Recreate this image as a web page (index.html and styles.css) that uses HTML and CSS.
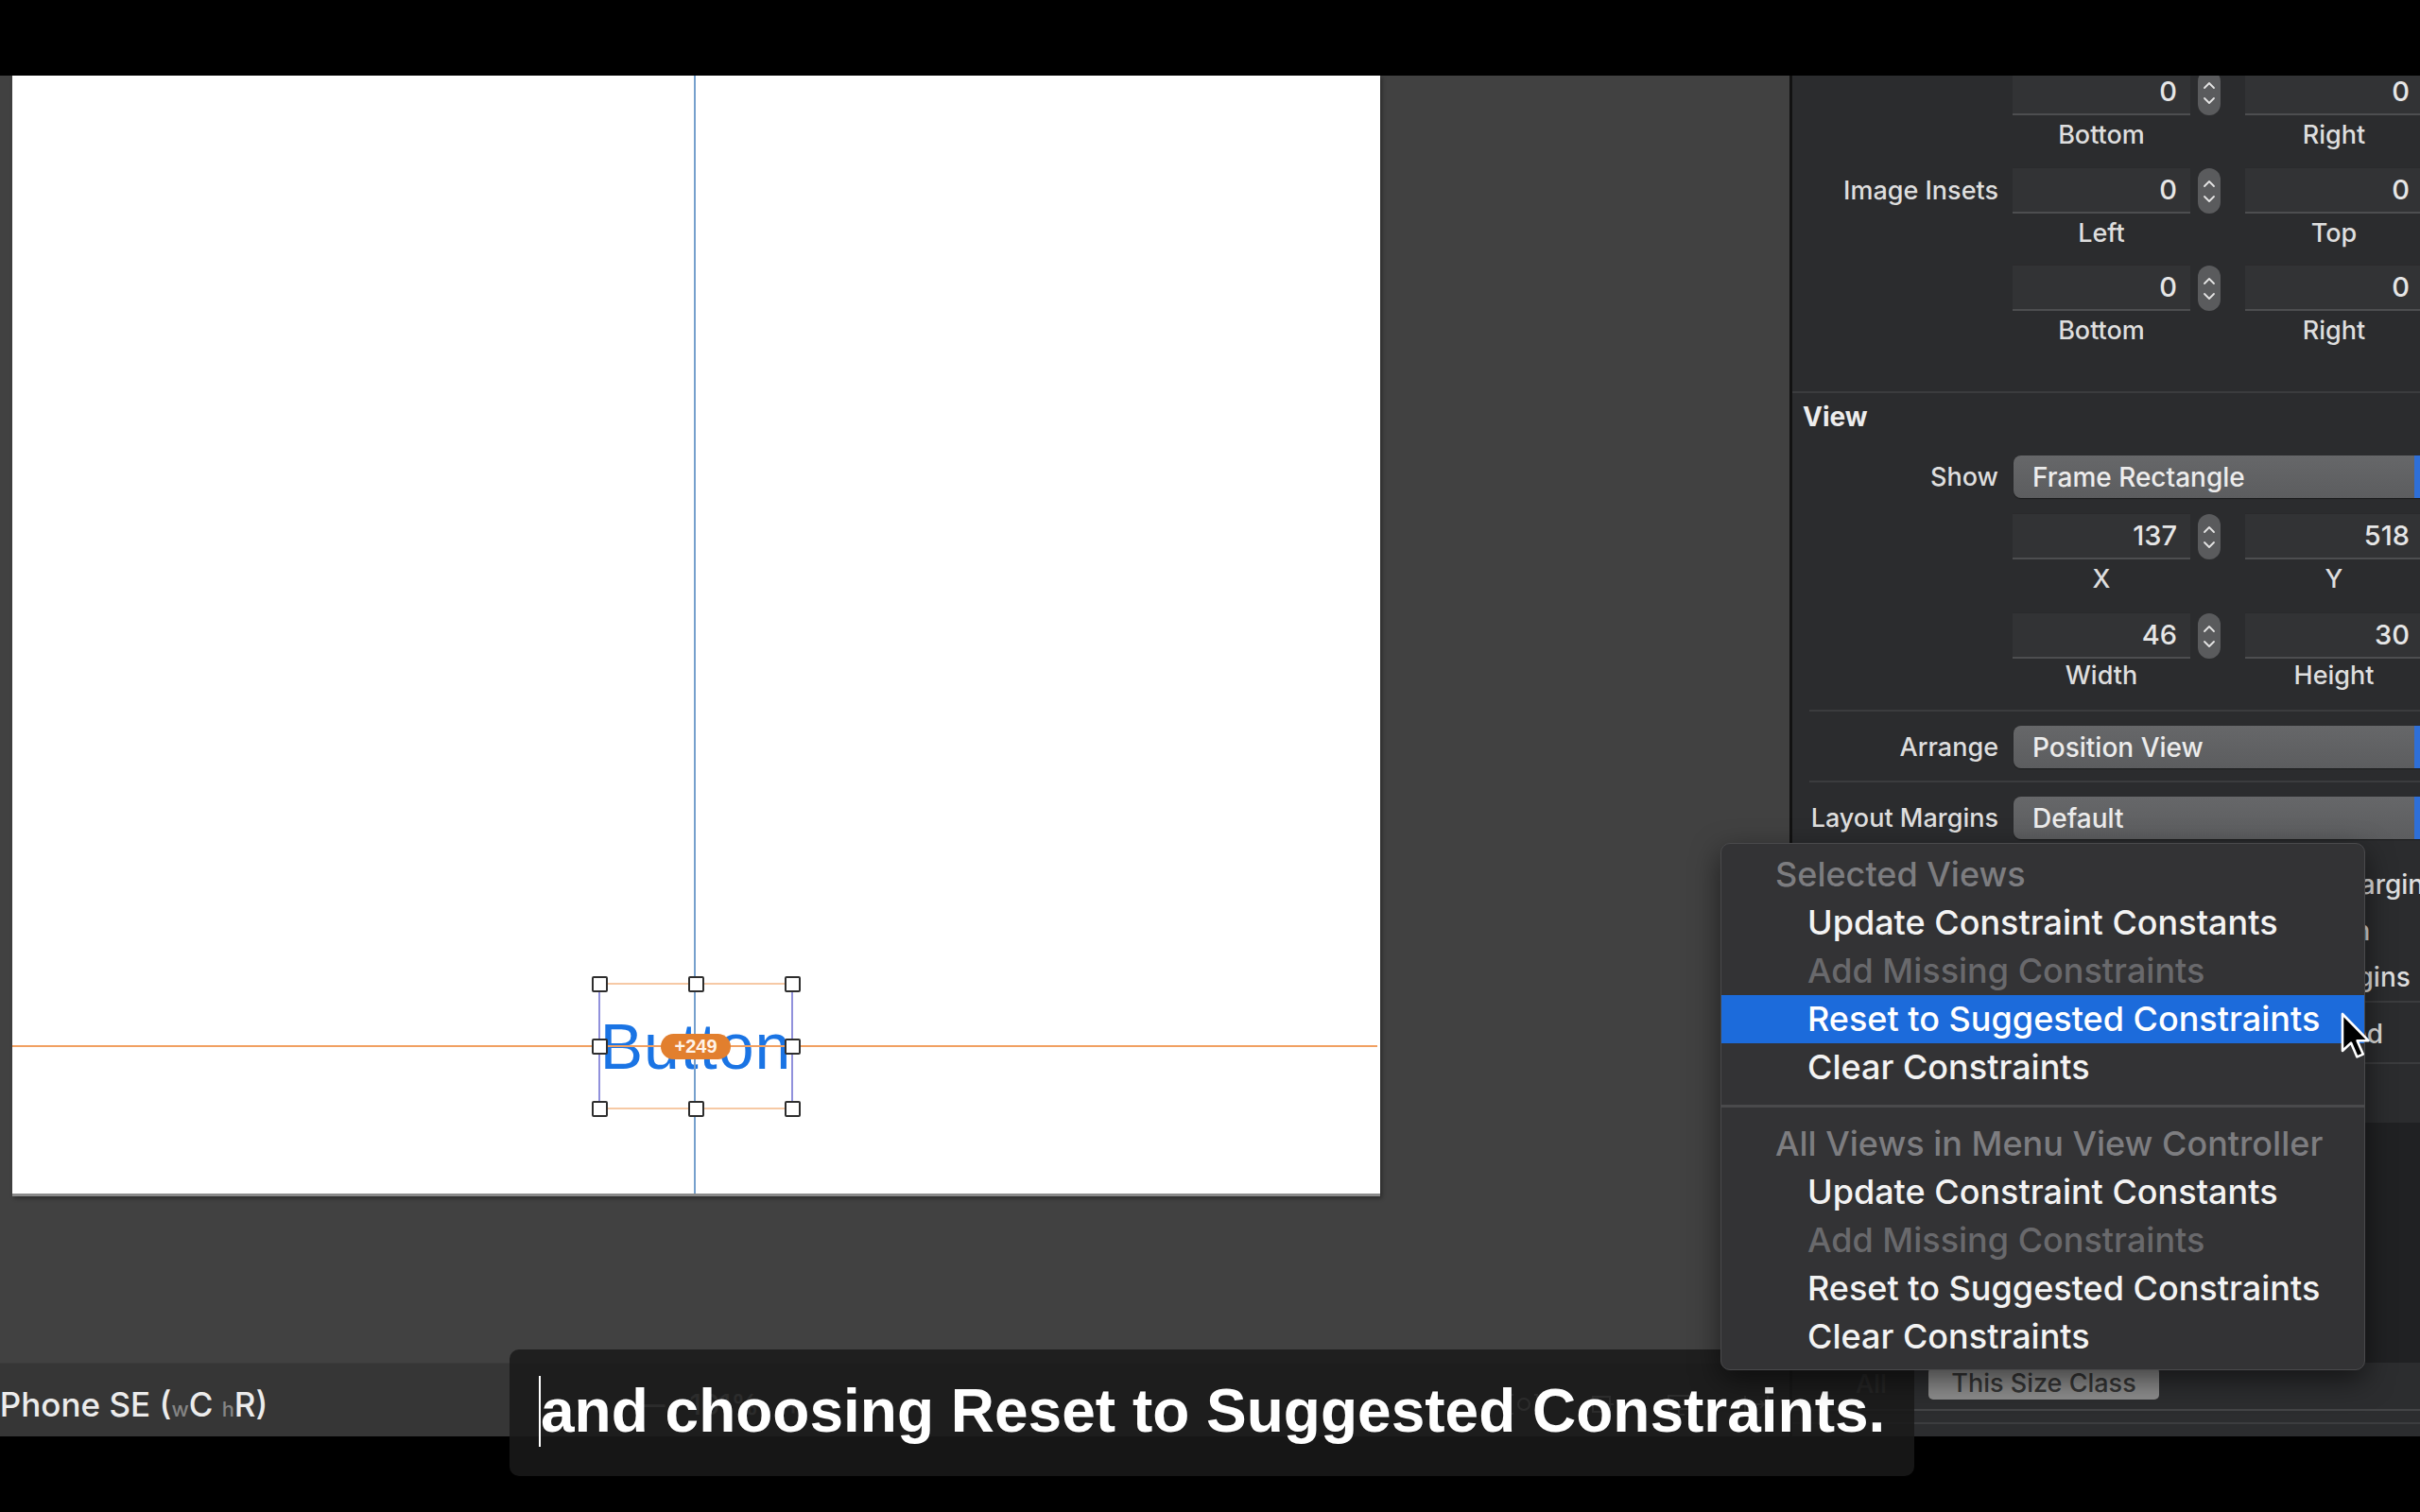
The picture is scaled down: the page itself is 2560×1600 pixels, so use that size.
FILE: index.html
```html
<!DOCTYPE html>
<html>
<head>
<meta charset="utf-8">
<title>Xcode constraints</title>
<link rel="stylesheet" href="styles.css">
</head>
<body>
<div class="topbar"></div>
<div class="main">
  <div class="editor">
    <div class="canvas-area">
      <div class="scene">
        <div class="btn-text">Button</div>
        <div class="guide-v"></div>
        <div class="guide-h"></div>
        <div class="sel">
          <i class="ln lt"></i><i class="ln lb"></i><i class="ln ll"></i><i class="ln lr"></i>
          <i class="hd tl"></i><i class="hd tc"></i><i class="hd tr"></i>
          <i class="hd ml"></i><i class="hd mr"></i>
          <i class="hd bl"></i><i class="hd bc"></i><i class="hd br"></i>
          <span class="badge">+249</span>
        </div>
      </div>
    </div>
    <div class="statusbar">
      <span class="device">iPhone SE (<span class="tiny">w</span>C <span class="tiny">h</span>R)</span>
      <span class="zoomctl"><span>—</span><span>161%</span><span>+</span></span>
      <div class="tools">
        <svg viewBox="0 0 30 26"><path d="M4 3H1v20h3M26 3h3v20h-3" fill="none" stroke="#9a9a9a" stroke-width="2"/><circle cx="15" cy="13" r="6" fill="none" stroke="#9a9a9a" stroke-width="2"/></svg>
        <svg viewBox="0 0 30 26"><rect x="6" y="5" width="18" height="16" fill="none" stroke="#9a9a9a" stroke-width="2"/><path d="M2 13h26" stroke="#9a9a9a" stroke-width="2"/></svg>
        <svg viewBox="0 0 30 26"><rect x="4" y="4" width="22" height="14" fill="none" stroke="#9a9a9a" stroke-width="2"/><path d="M15 18v6M9 24h12" stroke="#9a9a9a" stroke-width="2"/></svg>
        <svg viewBox="0 0 30 26"><path d="M3 4v18M27 4v18M8 13h14M11 9l-4 4 4 4M19 9l4 4-4 4" fill="none" stroke="#9a9a9a" stroke-width="2"/></svg>
      </div>
    </div>
  </div>

  <aside class="inspector">
    <div class="fieldrow first">
      <div class="ilabel"></div>
      <div class="field f1">0</div>
      <div class="stepper"><svg viewBox="0 0 24 48"><path d="M7 19l5-5 5 5M7 30l5 5 5-5" fill="none" stroke="#e4e4e4" stroke-width="1.8" stroke-linecap="round" stroke-linejoin="round"/></svg></div>
      <div class="field">0</div>
    </div>
    <div class="sublabels"><span>Bottom</span><span>Right</span></div>

    <div class="fieldrow gap19">
      <div class="ilabel">Image Insets</div>
      <div class="field f1">0</div>
      <div class="stepper"><svg viewBox="0 0 24 48"><path d="M7 19l5-5 5 5M7 30l5 5 5-5" fill="none" stroke="#e4e4e4" stroke-width="1.8" stroke-linecap="round" stroke-linejoin="round"/></svg></div>
      <div class="field">0</div>
    </div>
    <div class="sublabels"><span>Left</span><span>Top</span></div>

    <div class="fieldrow gap18">
      <div class="ilabel"></div>
      <div class="field f1">0</div>
      <div class="stepper"><svg viewBox="0 0 24 48"><path d="M7 19l5-5 5 5M7 30l5 5 5-5" fill="none" stroke="#e4e4e4" stroke-width="1.8" stroke-linecap="round" stroke-linejoin="round"/></svg></div>
      <div class="field">0</div>
    </div>
    <div class="sublabels"><span>Bottom</span><span>Right</span></div>

    <div class="isep wide"></div>
    <div class="ihead">View</div>

    <div class="poprow show">
      <div class="ilabel">Show</div>
      <div class="popup"><span>Frame Rectangle</span><i></i></div>
    </div>

    <div class="fieldrow gap16">
      <div class="ilabel"></div>
      <div class="field f1">137</div>
      <div class="stepper"><svg viewBox="0 0 24 48"><path d="M7 19l5-5 5 5M7 30l5 5 5-5" fill="none" stroke="#e4e4e4" stroke-width="1.8" stroke-linecap="round" stroke-linejoin="round"/></svg></div>
      <div class="field">518</div>
    </div>
    <div class="sublabels"><span>X</span><span>Y</span></div>

    <div class="fieldrow gap20">
      <div class="ilabel"></div>
      <div class="field f1">46</div>
      <div class="stepper"><svg viewBox="0 0 24 48"><path d="M7 19l5-5 5 5M7 30l5 5 5-5" fill="none" stroke="#e4e4e4" stroke-width="1.8" stroke-linecap="round" stroke-linejoin="round"/></svg></div>
      <div class="field">30</div>
    </div>
    <div class="sublabels tight"><span>Width</span><span>Height</span></div>

    <div class="isep s1"></div>
    <div class="poprow arrange">
      <div class="ilabel">Arrange</div>
      <div class="popup"><span>Position View</span><i></i></div>
    </div>
    <div class="isep s2"></div>
    <div class="poprow margins">
      <div class="ilabel">Layout Margins</div>
      <div class="popup"><span>Default</span><i></i></div>
    </div>

    <div class="check c1"><b></b><span>Safe Area Relative Margins</span></div>
    <div class="check c2"><b></b><span>Follow Readable Width Margin</span></div>
    <div class="check"><b></b><span>Preserve Superview Margins</span></div>
    <div class="isep s3"></div>
    <div class="check c4"><b></b><span>User Interaction Enabled</span></div>
    <div class="isep s4"></div>
    <div class="idark"></div>
    <div class="ibottom">
      <div class="segs"><span class="all">All</span><span class="sizeclass">This Size Class</span></div>
      <div class="bline l1"></div>
      <div class="bline l2"></div>
    </div>
  </aside>
</div>
<div class="bottombar"></div>

<div class="subtitle"><span class="caret"></span>and choosing Reset to Suggested Constraints.</div>

<div class="menu">
  <div class="mi mh">Selected Views</div>
  <div class="mi">Update Constraint Constants</div>
  <div class="mi dis">Add Missing Constraints</div>
  <div class="mi hl">Reset to Suggested Constraints</div>
  <div class="mi">Clear Constraints</div>
  <div class="msep"></div>
  <div class="mi mh">All Views in Menu View Controller</div>
  <div class="mi">Update Constraint Constants</div>
  <div class="mi dis">Add Missing Constraints</div>
  <div class="mi">Reset to Suggested Constraints</div>
  <div class="mi">Clear Constraints</div>
</div>

<svg class="cursor" viewBox="0 0 17 26"><path d="M1.5 1.5V21l4.5-4.2 3.2 7.4 3.2-1.4-3.1-7.2h5.9z" fill="#000" stroke="#fff" stroke-width="1.3" stroke-linejoin="round"/></svg>
</body>
</html>
```

FILE: styles.css
```css
* { box-sizing: border-box; margin: 0; padding: 0; }
html, body { width: 2560px; height: 1600px; overflow: hidden; background: #000; }
body { position: relative; font-family: Inter, "Liberation Sans", sans-serif; color: #e6e6e6; }

.topbar { height: 80px; background: #000; }
.bottombar { height: 80px; background: #000; }
.main { display: flex; height: 1440px; }

/* ---------- editor ---------- */
.editor { width: 1893px; display: flex; flex-direction: column; }
.canvas-area { height: 1362px; background: #414141; padding-left: 13px; overflow: hidden; }
.scene {
  position: relative; width: 1447px; height: 1186px; background: #fff;
  border-bottom: 3px solid #8a8a8a; box-shadow: 2px 2px 4px rgba(0,0,0,.35);
}
.guide-v { position: absolute; left: 721px; top: 0; width: 2px; height: 100%; background: #76a0cd; }
.guide-h { position: absolute; left: 0; right: 3px; top: 1026px; height: 2px; background: #f1a061; }
.btn-text {
  position: absolute; left: 611px; top: 961px; width: 224px; height: 132px;
  display: flex; align-items: center; justify-content: center;
  font-family: "Liberation Sans", Arial, sans-serif; font-size: 68px; line-height: 68px;
  color: #1a74e4; letter-spacing: 1px;
}
.sel { position: absolute; left: 621px; top: 961px; width: 204px; height: 132px; }
.ln { position: absolute; display: block; }
.ln.lt, .ln.lb { left: 0; width: 204px; height: 2px; background: #f6c9a5; }
.ln.lt { top: -1px; } .ln.lb { top: 131px; }
.ln.ll, .ln.lr { top: 0; height: 132px; width: 2px; background: #9191dc; }
.ln.ll { left: -1px; } .ln.lr { left: 203px; }
.hd { position: absolute; display: block; width: 17px; height: 17px; background: #fff; border: 2px solid #2e2e2e; border-radius: 2px; }
.hd.tl { left: -8px; top: -8px; } .hd.tc { left: 94px; top: -8px; } .hd.tr { left: 196px; top: -8px; }
.hd.ml { left: -8px; top: 58px; } .hd.mr { left: 196px; top: 58px; }
.hd.bl { left: -8px; top: 124px; } .hd.bc { left: 94px; top: 124px; } .hd.br { left: 196px; top: 124px; }
.badge {
  position: absolute; left: 65px; top: 53px; width: 74px; height: 27px; border-radius: 14px;
  background: #e27f2e; color: #fff3e8; font: bold 20px/27px "Liberation Sans", Arial, sans-serif; text-align: center;
}

.statusbar {
  height: 78px; background: #363636; border-top: 1px solid #3b3b3b;
  display: flex; align-items: center; padding-top: 8px; white-space: nowrap;
  font-size: 35px; font-weight: 500; color: #ececec;
}
.device { margin-left: -9px; }
.tiny { font-size: 22px; color: #858585; }
.zoomctl { margin-left: 390px; display: flex; gap: 26px; color: #9a9a9a; font-size: 30px; }
.tools { margin-left: auto; margin-right: 20px; display: flex; gap: 52px; }
.tools svg { width: 30px; height: 26px; }

/* ---------- inspector ---------- */
.inspector {
  width: 667px; background: #2b2c2e; border-left: 3px solid #121212;
  overflow: hidden; display: flex; flex-direction: column; font-size: 27px; font-weight: 500; color: #dedede;
}
.ilabel { width: 218px; flex: none; text-align: right; white-space: nowrap; }
.fieldrow { display: flex; align-items: center; height: 49px; flex: none; }
.fieldrow.first { margin-top: -7px; }
.gap19 { margin-top: 19px; } .gap18 { margin-top: 18px; } .gap16 { margin-top: 16px; } .gap20 { margin-top: 20px; }
.field {
  width: 188px; height: 49px; flex: none; background: #323335;
  border-top: 1px solid #2a2a2c; border-bottom: 2px solid #4d4e50;
  text-align: right; padding-right: 14px; font-size: 29px; line-height: 46px; color: #e6e6e6;
}
.field.f1 { margin-left: 15px; }
.stepper { width: 24px; height: 48px; margin: 0 26px 0 8px; border-radius: 12px; background: #5a5b5d; flex: none; }
.stepper svg { width: 24px; height: 48px; display: block; }
.sublabels { display: flex; height: 30px; line-height: 30px; margin-top: 6px; padding-left: 233px; flex: none; }
.sublabels span { width: 188px; text-align: center; flex: none; }
.sublabels span + span { margin-left: 58px; }
.sublabels.tight { margin-top: 3px; }

.isep { height: 2px; background: #3b3c3e; flex: none; }
.isep.wide { margin-top: 49px; }
.isep.s1 { margin: 21px 0 0 18px; }
.isep.s2 { margin: 13px 0 0 18px; }
.isep.s3 { margin: 1px 0 0 18px; }
.isep.s4 { margin: 6px 0 0 18px; }
.ihead { font-weight: 700; font-size: 28px; line-height: 34px; margin-top: 8px; padding-left: 11px; color: #ededed; flex: none; }

.poprow { display: flex; align-items: center; height: 45px; flex: none; }
.poprow.show { margin-top: 24px; }
.poprow.arrange { margin-top: 15px; }
.poprow.margins { margin-top: 15px; }
.popup {
  margin-left: 16px; width: 464px; height: 45px; flex: none; border-radius: 8px; overflow: hidden;
  background: linear-gradient(#666769, #5c5d5f); display: flex; align-items: center;
  box-shadow: 0 1px 1px rgba(0,0,0,.4);
}
.popup span { flex: 1; padding-left: 20px; font-size: 28px; color: #ececec; }
.popup i { width: 40px; align-self: stretch; background: #2e6fd8; }

.check { display: flex; align-items: center; gap: 12px; height: 49px; padding-left: 235px; flex: none; white-space: nowrap; font-size: 28px; }
.check b { width: 22px; height: 22px; border-radius: 4px; background: #5d5e60; flex: none; }
.check.c1 { margin-top: 23px; padding-left: 290px; }
.check.c2 { padding-left: 172px; }
.check.c4 { margin-top: 8px; padding-left: 262px; }
.idark { height: 254px; margin-top: 62px; background: #202123; flex: none; }
.ibottom { position: relative; flex: 1; background: #2c2d2f; }
.segs { display: flex; align-items: center; height: 38px; margin-top: 3px; padding-left: 67px; font-size: 27px; }
.segs .all { color: #6e6e6e; width: 77px; }
.segs .sizeclass {
  width: 244px; height: 34px; line-height: 34px; text-align: center; border-radius: 5px;
  background: #8c8c8c; color: #353535;
}
.bline { height: 2px; background: #444547; margin-top: 8px; }
.bline.l2 { margin-top: 12px; background: #3c3d3f; }

/* ---------- overlays ---------- */
.subtitle {
  position: absolute; left: 539px; top: 1428px; border-radius: 10px;
  padding: 28px 31px 31px 31px; background: rgba(26,26,26,.86); white-space: nowrap;
  font: bold 64px/75px "Liberation Sans", Arial, sans-serif; color: #fff;
}
.caret { display: inline-block; width: 2px; height: 75px; background: #fff; vertical-align: top; }

.menu {
  position: absolute; left: 1820px; top: 892px; width: 682px; padding: 7px 0 9px;
  background: #333335; border: 1px solid #4a4a4c; border-radius: 10px;
  box-shadow: 0 10px 30px rgba(0,0,0,.55); font-size: 36px; font-weight: 500; color: #f3f3f3;
}
.mi { height: 51px; line-height: 51px; padding-left: 91px; white-space: nowrap; }
.mi.mh { padding-left: 57px; color: #7d7d80; }
.mi.dis { color: #69696c; }
.mi.hl { background: #1c6bdb; color: #fff; }
.msep { height: 30px; display: flex; align-items: center; }
.msep::after { content: ""; display: block; width: 100%; height: 3px; background: #4a4a4c; }

.cursor { position: absolute; left: 2475px; top: 1070px; width: 34px; height: 52px; }
```
